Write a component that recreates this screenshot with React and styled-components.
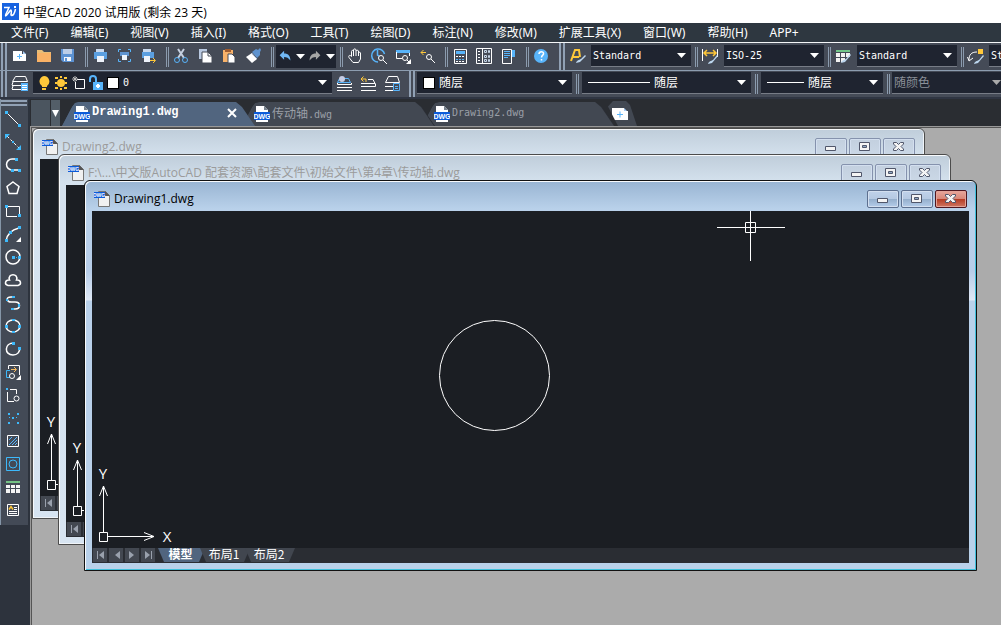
import React, { useState } from "react";
import styled, { createGlobalStyle, css } from "styled-components";

const GlobalStyle = createGlobalStyle`
  *, *::before, *::after {
    box-sizing: border-box;
  }
  html, body, #root {
    height: 100%;
    margin: 0;
  }
  body {
    overflow: hidden;
    font-family: "Open Sans", "Noto Sans CJK SC", sans-serif;
    font-size: 12px;
  }
  button, select {
    margin: 0;
    padding: 0;
    border: 0;
    border-radius: 0;
    background: none;
    color: inherit;
    font: inherit;
  }
  svg {
    display: block;
    flex: none;
  }
`;

const Page = styled.div`
  display: flex;
  flex-direction: column;
  height: 100vh;
  overflow: hidden;
  background: #2d333d;
  color: #fff;
`;

const TitleBar = styled.header`
  display: flex;
  align-items: center;
  gap: 4px;
  flex: none;
  height: 23px;
  padding-left: 2px;
  background: #fff;
  color: #000;
`;

const AppTitle = styled.h1`
  margin: 0;
  font-size: 12px;
  font-weight: 400;
  white-space: nowrap;
`;

const MenuBar = styled.nav`
  display: flex;
  flex: none;
  height: 20px;
  padding-left: 11px;
  gap: 22px;
  overflow: hidden;
  background: #2e3740;
  border-bottom: 1px solid #f4f6f8;
`;

const MenuItem = styled.button`
  flex: none;
  font-family: "Noto Sans", "Noto Sans CJK SC", sans-serif;
  line-height: 18px;
  white-space: nowrap;
`;

const Toolbar = styled.div`
  display: flex;
  align-items: center;
  flex: none;
  height: 28px;
  overflow: hidden;
  background: #454b57;
  border-bottom: ${(p) =>
    p.$last ? "2px solid #2f3542" : "1px solid #8d9db0"};
`;

const Grip = styled.span`
  flex: none;
  align-self: stretch;
  width: 6px;
  margin: ${(p) => p.$margin || "0 0 0 1px"};
  border: solid #91a1b5;
  border-width: 0 2px;
`;

const Separator = styled.span`
  flex: none;
  width: 3px;
  height: 20px;
  margin: 0 ${(p) => (p.$tight && p.$after) || 0}px 0
    ${(p) => (p.$tight ? 4 : 6)}px;
  border: solid #8b9bae;
  border-width: 0 1px;
`;

const ToolButton = styled.button`
  display: grid;
  place-items: center;
  flex: none;
  width: 24px;
  height: 24px;
  padding-bottom: 1px;
`;

const UndoBox = styled.div`
  display: flex;
  align-items: center;
  flex: none;
  width: 60px;
  height: 23px;
  margin-left: 2px;
  background: #1f2430;
`;

const UndoButton = styled.button`
  display: grid;
  place-items: center;
  width: ${(p) => (p.$arrow ? 12 : 18)}px;
  height: 22px;
`;

const ComboBox = styled.span`
  display: flex;
  align-items: center;
  flex: none;
  gap: 4px;
  width: ${(p) => p.$width}px;
  height: 22px;
  margin-left: ${(p) => p.$gap}px;
  margin-bottom: 2px;
  padding: 0 5px 0 ${(p) => (p.$wide ? 6 : 2)}px;
  background: #1f2430;
  border-bottom: 1px solid #777c86;
  color: ${(p) => (p.$muted ? "#8b9099" : "#fff")};
`;

const ComboSelect = styled.select`
  flex: 1;
  min-width: 0;
  height: 20px;
  appearance: none;
  outline: none;
  font-family: "DejaVu Sans Mono", "Noto Sans CJK SC", monospace;
  font-size: ${(p) => (p.$latin ? 10 : 12)}px;

  option {
    background: #1f2430;
  }
`;

const ColorSwatch = styled.span`
  flex: none;
  width: 12px;
  height: 12px;
  background: #fff;
  border: 1px solid #000;
`;

const LineSample = styled.span`
  flex: none;
  width: ${(p) => p.$length}px;
  height: 1px;
  background: #fff;
`;

const Workspace = styled.div`
  display: flex;
  flex: 1;
  min-height: 0;
`;

const SideBar = styled.aside`
  flex: none;
  width: 28px;
  margin-right: 2px;
`;

const SideTools = styled.div`
  display: flex;
  flex-direction: column;
  padding-bottom: 4px;
  background: #434a56;
  border-left: 1px solid #8596a8;
`;

const SideGrip = styled.span`
  height: 6px;
  margin: 1px 1px 1px 0;
  border: solid #91a1b5;
  border-width: 2px 0;
`;

const SideButton = styled.button`
  display: grid;
  place-items: center start;
  height: 23px;
  padding-left: 2px;
`;

const DocumentArea = styled.main`
  display: flex;
  flex: 1;
  flex-direction: column;
  min-width: 0;
`;

const TabBar = styled.div`
  display: flex;
  align-items: flex-end;
  flex: none;
  height: 27px;
  padding-left: 1px;
  background: #2a2d32;
`;

const TabListBlock = styled.span`
  flex: none;
  width: 19px;
  height: 26px;
  margin-right: 1px;
  background: #4b555f;
`;

const TabListButton = styled.button`
  display: grid;
  place-items: center;
  flex: none;
  width: 9px;
  height: 26px;
  background: #535e68;
`;

const tabShape = css`
  clip-path: polygon(
    0 100%, 10px 5px, 13px 1px, 17px 0,
    calc(100% - 19px) 0, calc(100% - 13px) 5px, 100% 100%
  );
`;

const FileTab = styled.div`
  position: relative;
  z-index: ${(p) => p.$order};
  display: flex;
  align-items: center;
  flex: none;
  gap: 2px;
  width: 193px;
  height: 24px;
  margin-left: ${(p) => (p.$first ? 2 : -13)}px;
  padding: 0 18px 2px 12px;
  background: ${(p) => (p.$active ? "#51657f" : "#2c3037")};
  color: ${(p) => (p.$active ? "#fff" : "#9a9fa7")};
  ${tabShape}

  &::before {
    content: "";
    position: absolute;
    z-index: -1;
    inset: 0 1px 0 0;
    background: ${(p) => (p.$active ? "#51657f" : "#424852")};
    ${tabShape}
  }
`;

const TabName = styled.button`
  flex: 1;
  overflow: hidden;
  padding-bottom: 2px;
  font-family: ${(p) =>
      p.$active ? '"Liberation Mono"' : '"DejaVu Sans Mono"'},
    "Noto Sans CJK SC", monospace;
  font-size: ${(p) => (p.$active ? 12 : 10)}px;
  font-weight: ${(p) => (p.$active ? 700 : 400)};
  text-align: left;
  white-space: nowrap;
`;

const CjkName = styled.span`
  font-size: 12px;
`;

const AddTab = styled.button`
  display: grid;
  place-items: center start;
  flex: none;
  width: 29px;
  height: 25px;
  margin-left: -7px;
  padding-left: 4px;
  background: #424852;
  clip-path: polygon(0 22%, 5px 0, 18px 0, 22px 16%, 100% 100%, 10px 100%);
`;

const Desktop = styled.div`
  position: relative;
  flex: 1;
  overflow: hidden;
  background: #ababab;
  border: solid #999;
  border-width: 1px 0 0 1px;
  box-shadow: inset 1px 1px #555;
`;

const frameFill = (active) =>
  active
    ? "linear-gradient(#98b4d2 0, #b9d1ea 28px, #b7cde8 90px, #dfe8f5 119px, #b9d1ea 120px)"
    : "linear-gradient(#bfcdda 0, #d5e2ee 28px, #d7e4f1 100%)";

const ChildWindow = styled.section`
  position: absolute;
  left: ${(p) => p.$x}px;
  top: ${(p) => p.$y}px;
  display: flex;
  flex-direction: column;
  width: 893px;
  height: 391px;
  padding: 0 7px 7px;
  border: 1px solid ${(p) => (p.$active ? "#111" : "#4c4c4c")};
  border-radius: 6px 6px 0 0;
  background: ${(p) => frameFill(p.$active)};
  box-shadow: inset 1px 1px #f8fafc,
    inset -1px -1px ${(p) => (p.$active ? "#3fc0dc" : "#f0f4f8")};
`;

const WindowTitle = styled.div`
  display: flex;
  align-items: center;
  flex: none;
  height: 30px;
  padding: 8px 2px 2px;
  gap: 4px;
  color: ${(p) => (p.$active ? "#000" : "#9b9b9b")};
`;

const WindowName = styled.h2`
  flex: 1;
  margin: 0;
  font-size: 12px;
  line-height: 18px;
  font-weight: 400;
  white-space: nowrap;
`;

const buttonFill = (p) => {
  if (p.$active && p.$close) {
    return "linear-gradient(#e8a79c, #d88778 48%, #b53a22 50%, #cf7763)";
  }
  return p.$active
    ? "linear-gradient(#c0d2ea, #b5c9e2 48%, #94aecb 50%, #b5cdea)"
    : "linear-gradient(#c3d0df, #cbd8e6)";
};

const WindowButtons = styled.div`
  display: flex;
  gap: 2px;
`;

const WindowButton = styled.button`
  display: grid;
  place-items: center;
  width: 32px;
  height: 18px;
  padding: 0 1px 1px 0;
  border: 1px solid
    ${(p) =>
      p.$active ? (p.$close ? "#4f1720" : "#5d708f") : "#8592ad"};
  border-radius: 2px;
  background: ${buttonFill};
  box-shadow: inset 0 0 0 1px
    ${(p) => (p.$close && p.$active ? "#e3a398" : "#d3dfef")};
`;

const Drawing = styled.div`
  flex: 1;
  min-height: 0;
  overflow: hidden;
  background: #1b1e23;
`;

const LayoutBar = styled.div`
  display: flex;
  flex: none;
  gap: 2px;
  height: 15px;
  padding: 0 0 1px 1px;
  background: #2a2d33;
`;

const LayoutNav = styled.button`
  display: grid;
  place-items: center;
  flex: none;
  width: 14px;
  height: 14px;
  background: #434851;
`;

const LayoutTab = styled.button`
  flex: none;
  width: ${(p) => (p.$active ? 47 : 50)}px;
  height: 14px;
  margin-left: ${(p) => (p.$active ? 1 : -7)}px;
  padding: 0 2px 3px 0;
  background: ${(p) => (p.$active ? "#51657f" : "#41464f")};
  clip-path: polygon(0 0, 100% 0, calc(100% - 6px) 100%, 6px 100%);
  font-family: "Noto Sans CJK SC", sans-serif;
  font-weight: ${(p) => (p.$active ? 700 : 400)};
  line-height: 11px;
  white-space: nowrap;
`;

const blue = "#58b4fa";
const steel = "#5f93cf";
const amber = "#ffc83a";

const icons = {
  new: (
    <>
      <path d="M4 5h9v3h4v7H4z" fill="#fff" />
      <path d="M14 5l3 3h-3z" fill="#a9cdf5" />
      <path d="M8 10.500h5M10.500 8v5" stroke={blue} />
    </>
  ),
  folder: (
    <>
      <path d="M4 4h5l2 2h7v3H4z" fill="#e8bd78" />
      <path d="M4 7h14v9H4z" fill="#fab266" />
    </>
  ),
  save: (
    <>
      <path d="M4 3h13v13H6l-2-2z" fill="#5c92d3" />
      <path d="M6 3h9v5H6z" fill="#bccee8" />
      <path d="M7 11h7v4H7z" fill="#f2f5fa" />
      <path d="M8 12h2v3H8z" fill="#5c92d3" />
    </>
  ),
  print: (
    <>
      <path d="M6 3h8v4H6z" fill="#c9d9ee" />
      <path d="M4 6h13v7H4z" fill="#5b9fe0" />
      <path d="M7 10h7v6H7z" fill="#eef3fa" />
    </>
  ),
  preview: (
    <>
      <path d="M4.500 6V3.500H7M14 3.500h2.500V6M16.500 13v2.500H14M7 15.500H4.500V13" stroke={blue} fill="none" />
      <path d="M6 6h9v4H6z" fill={steel} />
      <path d="M8 9h5v5H8z" fill="#eef3fa" />
    </>
  ),
  publish: (
    <>
      <path d="M5 3h8v4H5z" fill="#c9d9ee" />
      <path d="M4 6h12v6H4z" fill="#5b9fe0" />
      <path d="M6 10h6v6H6z" fill="#eef3fa" />
      <path d="M12 14.500h5M15 12l2.500 2.500L15 17" stroke={amber} fill="none" />
    </>
  ),
  cut: (
    <>
      <path d="M7 3l6 9M13 3L7 12" stroke="#c6d0e0" strokeWidth="2" />
      <circle cx="6" cy="14" r="2.500" stroke={blue} fill="none" />
      <circle cx="14" cy="14" r="2.500" stroke={blue} fill="none" />
    </>
  ),
  copy: (
    <>
      <path d="M4 3h8v10H4z" fill="#b9c9e1" />
      <path d="M7 6h6l4 4v7H7z" fill="#fff" stroke="#454b57" />
      <path d="M13 6v4h4" stroke="#454b57" fill="none" />
    </>
  ),
  paste: (
    <>
      <path d="M4 4h10v12H4z" fill="#f8b26a" />
      <path d="M6 3h6v3H6z" fill="#a35e30" />
      <path d="M9 8h4l3 3v6H9z" fill="#fff" stroke="#454b57" />
    </>
  ),
  match: (
    <>
      <path d="M3 11l6-4 5 6-5 4z" fill="#fff" />
      <path d="M9 6l4-3 2 1 2-2 1 2-1 2v3l-3 3z" fill={steel} />
      <path d="M8 7l6 6" stroke="#b9c9e1" />
    </>
  ),
  undo: (
    <path d="M4 8l5-5v3c5 0 7 3 7 8-2-3-4-4-7-4v3z" fill="#71b8f5" />
  ),
  redo: (
    <path d="M16 8l-5-5v3c-5 0-7 3-7 8 2-3 4-4 7-4v3z" fill="#a6a6a6" />
  ),
  pan: (
    <path
      d="M8 16.500l-4-5c-1-2 1-3 2.500-1V5.500c0-1.500 2-1.500 2 0V4c0-1.500 2.500-1.500 2.500 0v1c0-1 2.500-1 2.500 0v2c0-1 2-1 2 0v6l-2 3.500zM8.500 5v5M11 5v5M13.500 7v3"
      stroke="#fff"
      fill="none"
    />
  ),
  zoom: (
    <>
      <path d="M9 16A6.500 6.500 0 1 1 15.500 8M8.500 4v5l3 2" stroke={blue} strokeWidth="1.500" fill="none" />
      <circle cx="12" cy="12" r="2.500" stroke="#fff" fill="#454b57" />
      <path d="M14 14l4 4" stroke="#fff" />
    </>
  ),
  zoomWindow: (
    <>
      <path d="M3 4h14v3H3z" fill={blue} />
      <path d="M3.500 6v6.500H9M16.500 7v3" stroke="#fff" fill="none" />
      <circle cx="12" cy="12" r="2.500" stroke="#fff" fill="#454b57" />
      <path d="M14 14l2 2" stroke="#fff" />
      <path d="M18 13v5h-5z" fill="#fff" />
    </>
  ),
  zoomPrevious: (
    <>
      <path d="M4 6.500h5M6.500 4L4 6.500 6.500 9" stroke={amber} fill="none" />
      <circle cx="12" cy="11" r="2.500" stroke="#fff" fill="none" />
      <path d="M14 13l4 4" stroke="#fff" />
    </>
  ),
  calculator: (
    <>
      <path d="M4.500 3.500h12v14h-12z" stroke="#fff" fill="none" />
      <path d="M6 5h9v3H6z" fill={blue} />
      <path d="M6 10.500h9M6 15.500h9" stroke="#fff" strokeDasharray="2 1" />
      <path d="M6 13.500h9" stroke={blue} strokeDasharray="2 1" />
    </>
  ),
  palette: (
    <>
      <path d="M2.500 2.500h15v15h-15zM8.500 2.500v15" stroke="#fff" fill="none" />
      <path d="M4 5.500h3M4 8.500h3M4 11.500h3M4 14.500h3" stroke="#fff" strokeDasharray="2 1" />
      <path d="M10.500 4.500h2v2h-2zM14.500 4.500h1v2h-1zM10.500 9.500h2v2h-2zM14.500 9.500h1v2h-1zM10.500 13.500h2v2h-2zM14.500 13.500h1v2h-1z" stroke="#c6d6e8" fill="none" />
    </>
  ),
  properties: (
    <>
      <path d="M4.500 3.500h9v14h-9z" stroke="#fff" fill="none" />
      <path d="M14 4h3v7h-3z" fill={blue} />
      <path d="M6 5.500h6M6 7.500h6M6 9.500h6M6 11.500h4" stroke={blue} />
    </>
  ),
  help: (
    <>
      <circle cx="10" cy="10" r="7" fill={blue} />
      <path d="M8 8c0-3 5-3 4.500 0-.5 1.500-2 1.500-2 3.500M10.500 13v1.500" stroke="#fff" strokeWidth="1.500" fill="none" />
    </>
  ),
  textStyle: (
    <>
      <path d="M3 15l4-11h4l1 7M5 11h6" stroke={amber} strokeWidth="2" fill="none" />
      <path d="M17 9l1 1-6 6-4 1c1-3 3-3 5-4z" fill="#bcd6ee" />
    </>
  ),
  dimension: (
    <>
      <path d="M2.500 3v12M17.500 3v8" stroke="#fff" />
      <path d="M4 7h12M7 4L4 7l3 3M13 4l3 3-3 3" stroke={amber} strokeWidth="1.500" fill="none" />
      <path d="M17 9l1 1-6 7-4 1c1-3 3-3 5-4z" fill="#bcd6ee" />
    </>
  ),
  tableStyle: (
    <>
      <path d="M3 4h14v2H3z" fill="#72c68a" />
      <path d="M3 7h4v4H3zM8 7h4v4H8zM13 7h4v4h-4zM3 12h4v4H3zM8 12h4v4H8z" fill="#f2f2f2" />
      <path d="M17 8l1 1-6 7-4 1c1-3 3-3 5-4z" fill="#bcd6ee" />
    </>
  ),
  leader: (
    <>
      <path d="M3 14c0-5 2-8 8-8M1.500 11L3 15l4-3" stroke="#fff" fill="none" />
      <path d="M12 3h5v5h-5z" fill={amber} />
      <path d="M17 9l1 1-6 7-4 1c1-3 3-3 5-4z" fill="#bcd6ee" />
    </>
  ),
  layers: (
    <>
      <path d="M2.500 7.500l3-5h10l2 5zM2 11.500h9M2 15.500h9M3 8l-1 3M3 12l-1 3" stroke="#fff" fill="none" />
      <path d="M11 9h7v8h-7z" fill={blue} />
      <path d="M12 11.500h5M12 13.500h5M12 15.500h5" stroke="#fff" />
    </>
  ),
  layerCurrent: (
    <>
      <path d="M3.500 8.500l2-4h9l2 4z" stroke={blue} fill="none" />
      <circle cx="8" cy="5" r="3" fill="#c5cce4" />
      <path d="M3.500 9v1.500h14V9M3 13.500h15M3 16.500h15" stroke="#fff" fill="none" />
    </>
  ),
  layerPrevious: (
    <>
      <path d="M3 5h5v3M5.500 2.500L3 5l2.500 2.500" stroke={amber} fill="none" />
      <path d="M10 5.500h5l2 4H3M3 12.500h14.500v-3M3 16.500h15" stroke="#fff" fill="none" />
    </>
  ),
  layerStates: (
    <>
      <path d="M3.500 8.500l3-6h9l2 6zM3 12.500h8M3 16.500h8" stroke="#fff" fill="none" />
      <path d="M11.500 9.500h6v7h-6zM13 12.500h3M13 14.500h3" stroke={blue} fill="none" />
    </>
  ),
};

const cyan = "#3db9fb";

const sideIcons = {
  line: (
    <>
      <path d="M4 4l12 12" stroke="#fff" />
      <path d="M2 2h3v3H2zM15 15h3v3h-3z" fill={cyan} />
    </>
  ),
  xline: (
    <>
      <path d="M4 4l12 12" stroke="#fff" strokeDasharray="3 2" />
      <path d="M2 7V2h5zM18 13v5h-5zM9 9h2v2H9z" fill={cyan} />
    </>
  ),
  polyline: (
    <>
      <path d="M12 4H9a5.500 5.500 0 0 0 0 11h8" stroke="#fff" strokeWidth="1.500" fill="none" />
      <path d="M12 3h3v3h-3zM8 14h3v3H8zM15 14h3v3h-3z" fill={cyan} />
    </>
  ),
  polygon: (
    <path d="M10 4l6 4.500-2 7H6l-2-7z" stroke="#fff" strokeWidth="1.500" fill="none" />
  ),
  rectangle: (
    <>
      <path d="M5 5.500h11.500V14M3.500 7v8.500H14" stroke="#fff" fill="none" />
      <path d="M2 4h3v3H2zM15 13h3v3h-3z" fill={cyan} />
    </>
  ),
  arc: (
    <>
      <path d="M3 17c1-7 5-11 13-13" stroke="#fff" strokeWidth="1.500" fill="none" />
      <path d="M2 15h3v3H2zM6 7h3v3H6zM15 2h3v3h-3z" fill={cyan} />
      <path d="M18 13v5h-5z" fill="#fff" />
    </>
  ),
  circle: (
    <>
      <circle cx="10" cy="10" r="7" stroke="#fff" strokeWidth="1.500" fill="none" />
      <path d="M9 9h3v3H9zM15 9h3v3h-3zM13 10h1v1h-1z" fill={cyan} />
    </>
  ),
  cloud: (
    <path d="M5 15.500c-4-1-3-6 1.500-5.500-2.500-7 9.500-7 7 0 4.500-.5 5.500 4.500 1.500 5.500z" stroke="#fff" strokeWidth="1.500" fill="none" />
  ),
  spline: (
    <>
      <path d="M11 4H8c-6 0-4 5 0 5h4c6 0 6 7 0 7H9" stroke="#fff" strokeWidth="1.500" fill="none" />
      <path d="M9 3h3v2H9zM3 6h2v2H3zM15 11h2v3h-2zM8 15h3v2H8z" fill={cyan} />
    </>
  ),
  ellipse: (
    <>
      <ellipse cx="10" cy="10" rx="7" ry="6" stroke="#fff" strokeWidth="1.500" fill="none" />
      <path d="M9 3h3v2H9zM2 9h3v3H2zM15 9h3v3h-3zM9 15h3v2H9z" fill={cyan} />
    </>
  ),
  ellipseArc: (
    <>
      <path d="M11 4C1 4 1 16 10 16c5 0 6-3 7-6" stroke="#fff" strokeWidth="1.500" fill="none" />
      <path d="M9 3h3v3H9zM15 8h3v3h-3z" fill={cyan} />
    </>
  ),
  insertBlock: (
    <>
      <path d="M5.500 7V3.500h11V13" stroke="#fff" fill="none" />
      <path d="M7 8.500H3.500v7H7" stroke={cyan} fill="none" />
      <path d="M8 7.500h5M11 5l2.500 2.500L11 10" stroke="#f7bc60" fill="none" />
      <circle cx="9" cy="14" r="2.500" stroke="#fff" fill="none" />
      <path d="M18 13v5h-5z" fill="#fff" />
    </>
  ),
  makeBlock: (
    <>
      <path d="M7 4.500h6.500V9M4.500 7v9.500H11" stroke="#fff" fill="none" />
      <path d="M3 3h2v2H3z" fill={cyan} />
      <circle cx="13.500" cy="13.500" r="2.500" stroke="#fff" fill="none" />
    </>
  ),
  point: (
    <path d="M5 5h2v2H5zM14 5h2v2h-2zM9 9h2v2H9zM13 9h1v1h-1zM6 9h1v1H6zM5 14h2v2H5zM14 14h2v2h-2z" fill={cyan} />
  ),
  hatch: (
    <>
      <path d="M4.500 4.500h11v11h-11z" stroke="#fff" fill="none" />
      <path d="M6 9l3-3M6 14l8-8M9 14l5-5M12 14l2-2" stroke={blue} />
    </>
  ),
  region: (
    <>
      <path d="M3.500 3.500h13v13h-13z" stroke={cyan} fill="none" />
      <circle cx="10" cy="10" r="4" stroke={cyan} fill="none" />
    </>
  ),
  table: (
    <>
      <path d="M3 4h14v2H3z" fill="#73c184" />
      <path d="M3 8h4v3H3zM8 8h4v3H8zM13 8h4v3h-4zM3 12h4v4H3zM8 12h4v4H8zM13 12h4v4h-4z" fill="#f4f4f4" />
    </>
  ),
  text: (
    <>
      <path d="M4.500 4.500h11v11h-11z" stroke="#fff" fill="none" />
      <path d="M6 9.500l2-3 2 3" stroke={amber} strokeWidth="1.500" fill="none" />
      <path d="M11 7.500h3M11 9.500h3M6 11.500h8M6 13.500h8" stroke="#fff" />
    </>
  ),
};

const Icon = ({ set = icons, name, size = 20 }) => (
  <svg width={size} height={size} viewBox="0 0 20 20" aria-hidden="true">
    {set[name]}
  </svg>
);

const Arrow = ({ color = "#fff" }) => (
  <svg width="9" height="5" viewBox="0 0 9 5" aria-hidden="true">
    <path d="M0 0h9L4.500 5z" fill={color} />
  </svg>
);

const AppLogo = () => (
  <svg width="17" height="17" viewBox="0 0 17 17" aria-hidden="true">
    <path d="M0 0h17v17H0z" fill="#1763e0" />
    <path d="M2 4.500h5L3.500 12" stroke="#fff" strokeWidth="1.500" fill="none" />
    <path d="M3 13c3-1 4-5 6-6 1.500 1-1 5.500.5 5.500 2.500 0 3.500-4 4-6.500" stroke="#fff" strokeWidth="1.500" fill="none" />
    <path d="M12 3h2v2h-2z" fill="#fff" />
  </svg>
);

const DwgTabIcon = () => (
  <svg width="16" height="17" viewBox="0 0 16 17" aria-hidden="true">
    <path d="M2 1h8l4 4v12H2z" fill="#fff" />
    <path d="M10 1l4 4h-4z" fill="#77818e" />
    <path d="M0 7h16v8H0z" fill="#0c5bd9" />
    <text x="8" y="14" fontSize="7" fontWeight="700" fontFamily="Liberation Sans" fill="#fff" textAnchor="middle">
      DWG
    </text>
  </svg>
);

const DwgFileIcon = () => (
  <svg width="16" height="16" viewBox="0 0 16 16" aria-hidden="true">
    <path d="M4.500.5h7l4 4v11h-11z" fill="#f1f1f1" stroke="#777" />
    <path d="M11 0l5 5h-5z" fill="#555" />
    <path d="M0 1h11v6H0z" fill="#0c5bd9" />
    <text x="5" y="6" fontSize="5" fontWeight="700" fontFamily="Liberation Sans" fill="#fff" textAnchor="middle">
      DWG
    </text>
  </svg>
);

const LayerFlags = () => (
  <svg width="64" height="18" viewBox="0 0 64 18" aria-hidden="true">
    <path d="M5 2a5.500 5.500 0 0 1 3 10v1H3v-1A5.500 5.500 0 0 1 5 2zM3 14h4v2H3z" fill={amber} />
    <circle cx="22" cy="9" r="4" fill={amber} />
    <path d="M16 3h3v2h-3zM21 2h2v2h-2zM25 3h3v2h-3zM16 8h2v2h-2zM26 8h2v2h-2zM16 13h3v2h-3zM21 14h2v2h-2zM25 13h3v2h-3z" fill={amber} />
    <path d="M38 5.500h7.500v9h-9V8" stroke="#fff" fill="none" />
    <path d="M33 5h6M36 2v6M34 3l4 4M38 3l-4 4" stroke="#bbb" />
    <path d="M51 8V5c0-4 6-4 6 0v4" stroke={blue} strokeWidth="2" fill="none" />
    <path d="M54 8h10v8H54z" fill={blue} />
    <path d="M57 12h4M59 10v4" stroke="#fff" strokeWidth="2" />
  </svg>
);

const menus = [
  "文件(F)",
  "编辑(E)",
  "视图(V)",
  "插入(I)",
  "格式(O)",
  "工具(T)",
  "绘图(D)",
  "标注(N)",
  "修改(M)",
  "扩展工具(X)",
  "窗口(W)",
  "帮助(H)",
  "APP+",
];

const Tools = ({ names }) =>
  names.map((name) => (
    <ToolButton key={name} aria-label={name}>
      <Icon name={name} />
    </ToolButton>
  ));

const Combo = ({ label, value, width, gap = 0, wide, muted, latin, children }) => (
  <ComboBox $width={width} $gap={gap} $wide={wide} $muted={muted}>
    {children}
    <ComboSelect aria-label={label} defaultValue={value} $latin={latin}>
      <option>{value}</option>
    </ComboSelect>
    <Arrow color={muted ? "#aaa" : "#fff"} />
  </ComboBox>
);

const StandardToolbar = () => (
  <Toolbar>
    <Grip />
    <Tools names={["new", "folder", "save"]} />
    <Separator />
    <Tools names={["print", "preview", "publish"]} />
    <Separator />
    <Tools names={["cut", "copy", "paste", "match"]} />
    <Separator />
    <UndoBox>
      <UndoButton aria-label="undo">
        <Icon name="undo" size={18} />
      </UndoButton>
      <UndoButton aria-label="undo list" $arrow>
        <Arrow />
      </UndoButton>
      <UndoButton aria-label="redo">
        <Icon name="redo" size={18} />
      </UndoButton>
      <UndoButton aria-label="redo list" $arrow>
        <Arrow />
      </UndoButton>
    </UndoBox>
    <Separator $tight />
    <Tools names={["pan", "zoom", "zoomWindow", "zoomPrevious"]} />
    <Separator />
    <Tools names={["calculator", "palette", "properties"]} />
    <Separator />
    <Tools names={["help"]} />
    <Grip $margin="0 1px 0 6px" />
    <Tools names={["textStyle"]} />
    <Combo label="文字样式" value="Standard" width={100} gap={1} latin />
    <Separator $tight />
    <Tools names={["dimension"]} />
    <Combo label="标注样式" value="ISO-25" width={100} gap={2} latin />
    <Separator $tight />
    <Tools names={["tableStyle"]} />
    <Combo label="表格样式" value="Standard" width={100} gap={2} latin />
    <Separator $tight />
    <Tools names={["leader"]} />
    <Combo label="引线样式" value="Standard" width={100} gap={1} latin />
  </Toolbar>
);

const LayerToolbar = () => (
  <Toolbar $last>
    <Grip $margin="0 1px" />
    <Tools names={["layers"]} />
    <Combo label="图层" value="0" width={299} gap={1} wide latin>
      <LayerFlags />
      <ColorSwatch />
    </Combo>
    <Tools names={["layerCurrent", "layerPrevious", "layerStates"]} />
    <Grip $margin="0 2px 0 5px" />
    <Combo label="颜色" value="随层" width={155} wide>
      <ColorSwatch />
    </Combo>
    <Separator $tight $after={3} />
    <Combo label="线型" value="随层" width={169} wide>
      <LineSample $length={62} />
    </Combo>
    <Separator $tight $after={3} />
    <Combo label="线宽" value="随层" width={122} wide>
      <LineSample $length={37} />
    </Combo>
    <Separator $tight $after={2} />
    <Combo label="打印样式" value="随颜色" width={114} muted />
  </Toolbar>
);

const WindowControls = ({ active }) => (
  <WindowButtons>
    <WindowButton $active={active} aria-label="最小化">
      <svg width="11" height="11" viewBox="0 0 11 11" aria-hidden="true">
        <path d="M.5 5.500h10v4H.5z" fill="#f4f4f4" stroke="#50566a" />
      </svg>
    </WindowButton>
    <WindowButton $active={active} aria-label="最大化">
      <svg width="11" height="9" viewBox="0 0 11 9" aria-hidden="true">
        <path d="M.5.5h10v8H.5z" fill="#f4f4f4" stroke="#50566a" />
        <path d="M3.500 3.500h4v2h-4z" fill="#8fa8c4" stroke="#50566a" />
      </svg>
    </WindowButton>
    <WindowButton $active={active} $close aria-label="关闭">
      <svg width="11" height="9" viewBox="0 0 11 9" aria-hidden="true">
        <path
          d="M.5.5h3l2 2 2-2h3v1.500L8 4.500 10.500 7v1.500h-3l-2-2-2 2h-3V7L3 4.500.5 2z"
          fill="#f4f4f4"
          stroke="#50566a"
        />
      </svg>
    </WindowButton>
  </WindowButtons>
);

const Model = ({ active }) => (
  <svg width="877" height="337" fill="none" stroke="#fff" aria-hidden="true">
    {active && (
      <>
        <circle cx="402.500" cy="164.500" r="55" />
        <path d="M625 16.500h68M658.500 0v50M653.500 11.500h10v10h-10z" />
      </>
    )}
    <path d="M7.500 321.500h8v9h-8zM11.500 321V275M7.500 285l4-10 4 10M16 325.500h46M52 321.500l10 4-10 4" />
    <g fill="#fff" stroke="none" fontFamily="Open Sans" fontSize="15" textAnchor="middle">
      <text x="11" y="268">Y</text>
      <text x="75" y="331">X</text>
    </g>
  </svg>
);

const navShapes = [
  "M4 3h1v8H4zM11 3v8L6 7z",
  "M11 3v8L6 7z",
  "M4 3v8l5-4z",
  "M4 3v8l5-4zM10 3h1v8h-1z",
];
const navNames = ["第一个", "上一个", "下一个", "最后一个"];

const CadWindow = ({ name, x, y, active }) => (
  <ChildWindow $x={x} $y={y} $active={active}>
    <WindowTitle $active={active}>
      <DwgFileIcon />
      <WindowName>{name}</WindowName>
      <WindowControls active={active} />
    </WindowTitle>
    <Drawing>
      <Model active={active} />
    </Drawing>
    <LayoutBar>
      {navShapes.map((d, i) => (
        <LayoutNav key={d} aria-label={navNames[i]}>
          <svg width="14" height="14" viewBox="0 0 14 14" aria-hidden="true">
            <path d={d} fill="#9aa1ad" />
          </svg>
        </LayoutNav>
      ))}
      {active && (
        <>
          <LayoutTab $active>模型</LayoutTab>
          <LayoutTab>布局1</LayoutTab>
          <LayoutTab>布局2</LayoutTab>
        </>
      )}
    </LayoutBar>
  </ChildWindow>
);

const files = [
  { id: 1, name: "Drawing1.dwg" },
  { id: 2, cjk: "传动轴", name: ".dwg" },
  { id: 3, name: "Drawing2.dwg" },
];

const App = () => {
  const [current, setCurrent] = useState(1);

  return (
    <Page>
      <GlobalStyle />
      <TitleBar>
        <AppLogo />
        <AppTitle>中望CAD 2020 试用版 (剩余 23 天)</AppTitle>
      </TitleBar>
      <MenuBar>
        {menus.map((menu) => (
          <MenuItem key={menu}>{menu}</MenuItem>
        ))}
      </MenuBar>
      <StandardToolbar />
      <LayerToolbar />
      <Workspace>
        <SideBar>
          <SideTools>
            <SideGrip />
            {Object.keys(sideIcons).map((name) => (
              <SideButton key={name} aria-label={name}>
                <Icon set={sideIcons} name={name} />
              </SideButton>
            ))}
          </SideTools>
        </SideBar>
        <DocumentArea>
          <TabBar>
            <TabListBlock />
            <TabListButton aria-label="文件列表">
              <svg width="7" height="7" viewBox="0 0 7 7" aria-hidden="true">
                <path d="M0 0h7L3.500 7z" fill="#fff" />
              </svg>
            </TabListButton>
            {files.map((file, i) => {
              const active = file.id === current;
              return (
                <FileTab
                  key={file.id}
                  $first={i === 0}
                  $active={active}
                  $order={active ? 9 : 5 - i}
                >
                  <DwgTabIcon />
                  <TabName $active={active} onClick={() => setCurrent(file.id)}>
                    {file.cjk && <CjkName>{file.cjk}</CjkName>}
                    {file.name}
                  </TabName>
                  {active && (
                    <button aria-label="关闭">
                      <svg width="10" height="10" viewBox="0 0 10 10">
                        <path d="M1 1l8 8M9 1L1 9" stroke="#fff" strokeWidth="2" />
                      </svg>
                    </button>
                  )}
                </FileTab>
              );
            })}
            <AddTab aria-label="新建">
              <svg width="16" height="12" viewBox="0 0 16 12" aria-hidden="true">
                <path d="M0 0h12v3h4v9H0z" fill="#fff" />
                <path d="M12 0l3 3h-3z" fill="#a9cdf5" />
                <path d="M5 6.500h6M8 3.500v6" stroke={blue} />
              </svg>
            </AddTab>
          </TabBar>
          <Desktop>
            <CadWindow name="Drawing2.dwg" x={1} y={1} />
            <CadWindow
              name="F:\...\中文版AutoCAD 配套资源\配套文件\初始文件\第4章\传动轴.dwg"
              x={27}
              y={27}
            />
            <CadWindow name="Drawing1.dwg" x={53} y={53} active />
          </Desktop>
        </DocumentArea>
      </Workspace>
    </Page>
  );
};

export default App;
